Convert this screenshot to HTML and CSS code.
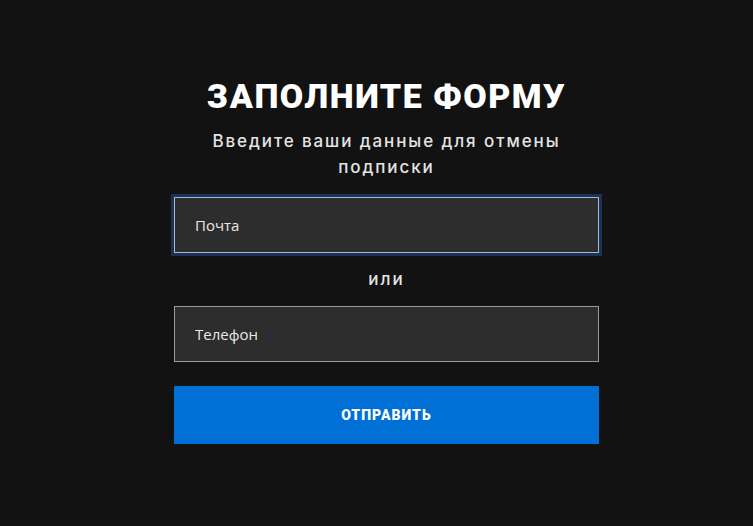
FILE: index.html
```html
<!DOCTYPE html>
<html lang="ru">
<head>
<meta charset="utf-8">
<title>Заполните форму</title>
<link rel="stylesheet" href="styles.css">
</head>
<body>
<main class="page">
  <form class="form">
    <h1 class="title">ЗАПОЛНИТЕ ФОРМУ</h1>
    <p class="subtitle">Введите ваши данные для отмены подписки</p>
    <div class="field field-focus"><input class="input" type="text" placeholder="Почта"></div>
    <div class="or">или</div>
    <div class="field"><input class="input" type="text" placeholder="Телефон"></div>
    <button class="submit" type="button">ОТПРАВИТЬ</button>
  </form>
</main>
</body>
</html>
```
FILE: styles.css
```css
html, body {
  margin: 0;
  padding: 0;
  background: #121212;
}
body {
  font-family: "Open Sans", "Noto Sans", sans-serif;
  color: #e6e6e6;
}
.page {
  display: flex;
  justify-content: center;
  padding: 78px 0 0 20px;
}
.form {
  width: 425px;
  display: flex;
  flex-direction: column;
  align-items: stretch;
}
.title {
  margin: 0;
  text-align: center;
  font-family: Roboto, "Liberation Sans", sans-serif;
  font-weight: 900;
  font-size: 34px;
  line-height: 36px;
  letter-spacing: 1.5px;
  color: #ffffff;
}
.subtitle {
  margin: 14px 10px 0;
  text-align: center;
  font-family: Inter, "Noto Sans", sans-serif;
  font-size: 17px;
  font-weight: 500;
  line-height: 26px;
  letter-spacing: 1.9px;
  color: #e4e4e4;
}
.field {
  margin-top: 13px;
  border: 1px solid #9a9a9a;
  background: #2d2d2d;
  height: 54px;
  display: flex;
}
.field-focus {
  margin-top: 17px;
  border-color: #a9b7cc;
  box-shadow: 0 0 0 3px #1b3256;
}
.input {
  flex: 1;
  border: 0;
  background: transparent;
  outline: none;
  padding: 0 20px;
  font-family: "Open Sans", "Noto Sans", sans-serif;
  font-size: 15px;
  color: #eee;
}
.input::placeholder {
  color: #e8e8e8;
  opacity: 1;
}
.or {
  margin-top: 15px;
  margin-bottom: 3px;
  text-align: center;
  font-family: Inter, "Noto Sans", sans-serif;
  font-size: 17px;
  font-weight: 500;
  letter-spacing: 2px;
  line-height: 22px;
  color: #e4e4e4;
}
.submit {
  margin-top: 24px;
  height: 58px;
  border: 0;
  background: #006fd6;
  color: #ffffff;
  font-family: Roboto, "Liberation Sans", sans-serif;
  font-weight: 900;
  font-size: 14px;
  letter-spacing: 1px;
  cursor: pointer;
}
```
